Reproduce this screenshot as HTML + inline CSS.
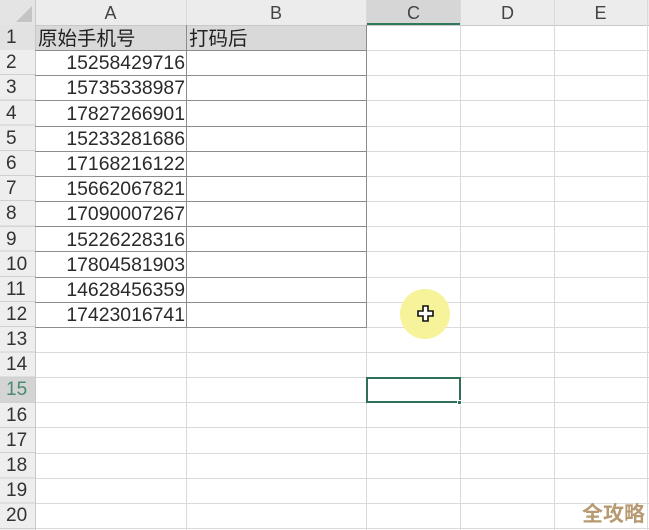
<!DOCTYPE html>
<html><head><meta charset="utf-8"><style>
*{margin:0;padding:0;box-sizing:border-box}
body{width:649px;height:530px;overflow:hidden;background:#fff;position:relative;font-family:"Liberation Sans","Noto Sans CJK SC",sans-serif;color:#222}
.a{position:absolute}
.hl{position:absolute;left:0;width:649px;height:1px;background:#dadada}
.vl{position:absolute;top:0;width:1px;height:530px;background:#dadada}
.rn{position:absolute;left:0;width:35px;height:25px;font-size:19px;line-height:26px;padding-left:6px;color:#333;background:#eeeeee}
.num{position:absolute;left:36px;width:149px;height:25px;text-align:right;font-size:19.4px;line-height:27px;color:#2a2a2a}
.ch{position:absolute;top:0;height:25px;font-size:18px;line-height:27px;text-align:center;color:#444}
</style></head><body>
<div class="a" style="left:0;top:0;width:649px;height:25px;background:#ececec"></div>
<div class="a" style="left:0;top:0;width:35px;height:25px;background:#e4e4e4"></div>
<div class="a" style="left:16px;top:6px;width:0;height:0;border-left:16px solid transparent;border-bottom:16px solid #c4c4c4"></div>
<div class="a" style="left:366px;top:0;width:95px;height:25px;background:#d6d6d6"></div>
<div class="a" style="left:366px;top:23px;width:95px;height:2px;background:#2f7a58"></div>
<div class="ch" style="left:35px;width:151px">A</div>
<div class="ch" style="left:186px;width:180px">B</div>
<div class="ch" style="left:366px;width:95px">C</div>
<div class="ch" style="left:461px;width:93px">D</div>
<div class="ch" style="left:554px;width:93px">E</div>
<div class="a" style="left:0;top:25px;width:35px;height:505px;background:#eeeeee"></div>
<div class="a" style="left:0;top:377px;width:35px;height:25px;background:#d4d4d4"></div>
<div class="a" style="left:34px;top:377px;width:2px;height:25px;background:#2f7a58"></div>
<div class="a" style="left:36px;top:25px;width:330px;height:25px;background:#d9d9d9"></div>
<div class="hl" style="top:25px;background:#c8c8c8"></div>
<div class="hl" style="top:50px"></div><div class="hl" style="top:75px"></div><div class="hl" style="top:100px"></div><div class="hl" style="top:126px"></div><div class="hl" style="top:151px"></div><div class="hl" style="top:176px"></div><div class="hl" style="top:201px"></div><div class="hl" style="top:226px"></div><div class="hl" style="top:251px"></div><div class="hl" style="top:277px"></div><div class="hl" style="top:302px"></div><div class="hl" style="top:327px"></div><div class="hl" style="top:352px"></div><div class="hl" style="top:377px"></div><div class="hl" style="top:402px"></div><div class="hl" style="top:427px"></div><div class="hl" style="top:453px"></div><div class="hl" style="top:478px"></div><div class="hl" style="top:503px"></div><div class="hl" style="top:528px"></div>
<div class="vl" style="left:35px;background:#c8c8c8"></div>
<div class="vl" style="left:186px"></div><div class="vl" style="left:366px"></div><div class="vl" style="left:460px"></div><div class="vl" style="left:554px"></div><div class="vl" style="left:647px"></div>
<div class="a" style="left:35px;top:50px;width:332px;height:1px;background:#8c8c8c"></div>
<div class="a" style="left:35px;top:75px;width:332px;height:1px;background:#8c8c8c"></div>
<div class="a" style="left:35px;top:100px;width:332px;height:1px;background:#8c8c8c"></div>
<div class="a" style="left:35px;top:126px;width:332px;height:1px;background:#8c8c8c"></div>
<div class="a" style="left:35px;top:151px;width:332px;height:1px;background:#8c8c8c"></div>
<div class="a" style="left:35px;top:176px;width:332px;height:1px;background:#8c8c8c"></div>
<div class="a" style="left:35px;top:201px;width:332px;height:1px;background:#8c8c8c"></div>
<div class="a" style="left:35px;top:226px;width:332px;height:1px;background:#8c8c8c"></div>
<div class="a" style="left:35px;top:251px;width:332px;height:1px;background:#8c8c8c"></div>
<div class="a" style="left:35px;top:277px;width:332px;height:1px;background:#8c8c8c"></div>
<div class="a" style="left:35px;top:302px;width:332px;height:1px;background:#8c8c8c"></div>
<div class="a" style="left:35px;top:327px;width:332px;height:1px;background:#8c8c8c"></div>
<div class="a" style="left:186px;top:25px;width:1px;height:303px;background:#8c8c8c"></div>
<div class="a" style="left:366px;top:25px;width:1px;height:303px;background:#8c8c8c"></div>
<div class="rn" style="top:25px;background:#e2e2e2">1</div><div class="rn" style="top:50px">2</div><div class="rn" style="top:75px">3</div><div class="rn" style="top:101px">4</div><div class="rn" style="top:126px">5</div><div class="rn" style="top:151px">6</div><div class="rn" style="top:176px">7</div><div class="rn" style="top:201px">8</div><div class="rn" style="top:227px">9</div><div class="rn" style="top:252px">10</div><div class="rn" style="top:277px">11</div><div class="rn" style="top:302px">12</div><div class="rn" style="top:327px">13</div><div class="rn" style="top:352px">14</div><div class="rn" style="top:377px;background:#d4d4d4;color:#4b8a6c">15</div><div class="rn" style="top:403px">16</div><div class="rn" style="top:428px">17</div><div class="rn" style="top:453px">18</div><div class="rn" style="top:478px">19</div><div class="rn" style="top:503px">20</div>
<div class="a" style="left:0;top:50px;width:35px;height:480px;background:repeating-linear-gradient(to bottom,transparent 0,transparent 24.2px,#d0d0d0 24.2px,#d0d0d0 25.2px)"></div>
<div class="a" style="left:38px;top:25px;font-size:19.5px;line-height:28px;color:#222">原始手机号</div>
<div class="a" style="left:189px;top:25px;font-size:19.5px;line-height:28px;color:#222">打码后</div>
<div class="num" style="top:50px">15258429716</div>
<div class="num" style="top:75px">15735338987</div>
<div class="num" style="top:101px">17827266901</div>
<div class="num" style="top:126px">15233281686</div>
<div class="num" style="top:151px">17168216122</div>
<div class="num" style="top:176px">15662067821</div>
<div class="num" style="top:201px">17090007267</div>
<div class="num" style="top:227px">15226228316</div>
<div class="num" style="top:252px">17804581903</div>
<div class="num" style="top:277px">14628456359</div>
<div class="num" style="top:302px">17423016741</div>
<div class="a" style="left:366px;top:377px;width:95px;height:26px;border:2px solid #2f6f55"></div>
<div class="a" style="left:457px;top:400px;width:5px;height:5px;background:#2f6f55;border:1px solid #fff"></div>
<div class="a" style="left:400px;top:289px;width:50px;height:50px;border-radius:50%;background:#f6f39a"></div>
<svg class="a" style="left:416px;top:304px" width="20" height="20" viewBox="0 0 20 20"><path d="M7 2h5v5h5v5h-5v5H7v-5H2V7h5z" fill="#fff" stroke="#111" stroke-width="1.6"/></svg>
<div class="a" style="left:582px;top:498px;font-size:21px;font-weight:bold;color:#b89a72">全攻略</div>
</body></html>
